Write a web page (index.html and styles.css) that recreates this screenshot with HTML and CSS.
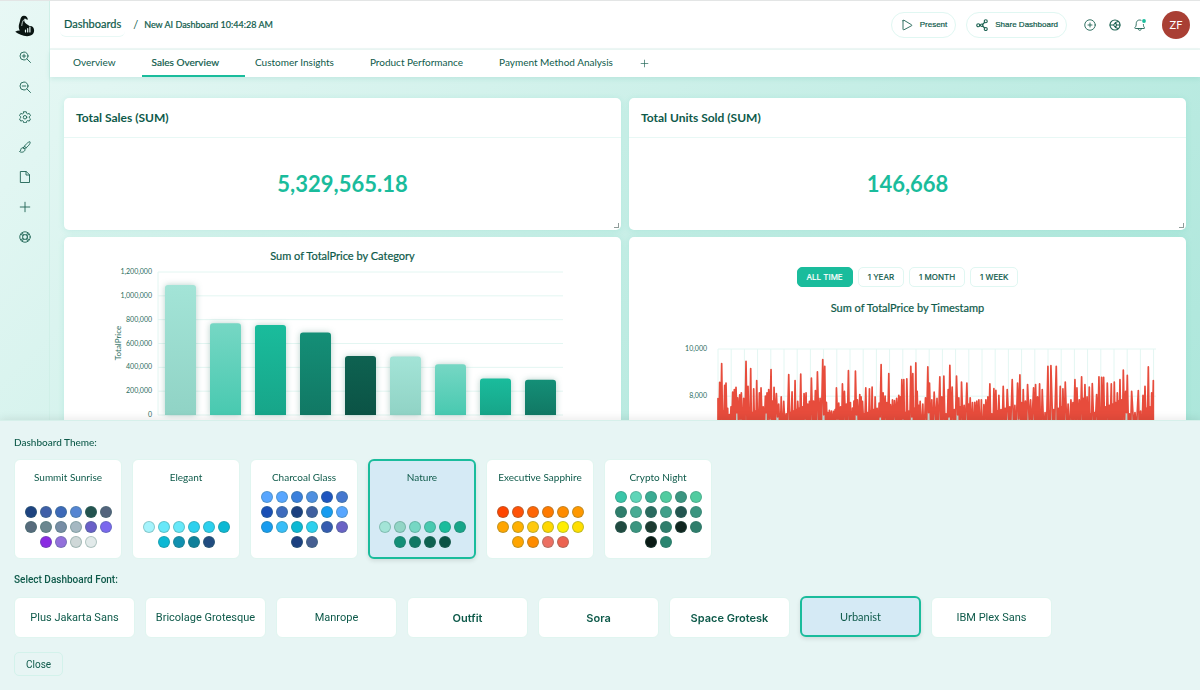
FILE: index.html
```html
<!DOCTYPE html>
<html lang="en">
<head>
    <meta charset="UTF-8">
    <meta name="viewport" content="width=device-width, initial-scale=1.0">
    <title>New AI Dashboard</title>
    <link rel="stylesheet" href="styles.css">
</head>
<body>
    <aside class="sidebar">
        <svg class="logo" viewBox="0 0 20 22">
            <path d="M5 6C5.500 2.500 7 .6 9 .7c2.500 0 3.700 1.700 3.900 4L11 4.200c-.6-1-1.700-.8-1.800.2-.2 1.600.6 3.400 2.300 4.600l3 2c3-.3 4.600 1.700 4.600 4.600 0 3.700-3 5.700-7 5.700-4.600 0-8.200-2.300-11.900-4.500 1.500-1 3-1.500 4.600-1.400C3.600 13.500 3.600 11 4 9.500z" fill="#0a1512"/>
            <path d="M10.500 17v-2M12.700 17v-3.500M14.900 17v-5" stroke="#e8f8f5" stroke-width="1.200"/>
            <path d="M6.800 10.500c.2-2 .5-4 1.800-5.500" stroke="#e8f8f5" stroke-width=".8" fill="none"/>
        </svg>
        <button class="icon-btn" aria-label="Zoom in">
            <svg viewBox="0 0 24 24"><circle cx="10" cy="10" r="8"/><path d="M16 16l7 7M10 6.500v7M6.500 10h7"/></svg>
        </button>
        <button class="icon-btn" aria-label="Zoom out">
            <svg viewBox="0 0 24 24"><circle cx="10" cy="10" r="8"/><path d="M16 16l7 7M6.500 10h7"/></svg>
        </button>
        <button class="icon-btn" aria-label="Settings">
            <svg viewBox="0 0 24 24"><path d="M9.500 1.500h5l.8 3.200 2 1.200 3.200-1 2.500 4.300-2.400 2.200v2.300l2.400 2.200-2.500 4.300-3.200-1-2 1.200-.8 3.100h-5l-.8-3.100-2-1.200-3.200 1L1 15.900l2.400-2.200v-2.300L1 9.200l2.500-4.300 3.200 1 2-1.200z"/><circle cx="12" cy="12.500" r="3.500"/></svg>
        </button>
        <button class="icon-btn" aria-label="Theme">
            <svg viewBox="0 0 24 24"><path d="M9 13.500C12 8 18 1.500 22 1.500c2 3-4.500 10.500-10 13.500zM8.500 13.500c-3-.5-5 1.500-5 4 0 1.800-1 3-2.500 3.500 4 3 11 1 11-4 0-1.800-1.500-3.300-3.500-3.500zM11 10.500l3.500 3"/></svg>
        </button>
        <button class="icon-btn" aria-label="New page">
            <svg viewBox="0 0 24 24"><path d="M3.500 1h11l6.500 6.500V23h-17.500zM14 1v7h7"/></svg>
        </button>
        <button class="icon-btn" aria-label="Add">
            <svg viewBox="0 0 24 24"><path d="M12 2.500v19M2.500 12h19"/></svg>
        </button>
        <button class="icon-btn" aria-label="Help">
            <svg viewBox="0 0 24 24"><circle cx="12" cy="12" r="10.500"/><circle cx="12" cy="12" r="5"/><path d="M3.500 6.500l4.500 2.500M6.500 3.500L9 8M17.500 3.500L15 8M20.500 6.500L16 9M3.500 17.500L8 15M6.500 20.500L9 16M17.500 20.500L15 16M20.500 17.500L16 15"/></svg>
        </button>
    </aside>

    <div class="page">
        <header class="topbar">
            <a class="crumb-home" href="#">Dashboards</a>
            <span class="crumb-sep">/</span>
            <span class="crumb">New AI Dashboard 10:44:28 AM</span>
            <div class="actions">
                <button class="pill">
                    <svg viewBox="0 0 24 24"><path d="M4 3.500v17c0 1 1 1.500 2 1l15-8c1-.6 1-1.500 0-2l-15-9c-1-.5-2 0-2 1z"/></svg>
                    Present
                </button>
                <button class="pill">
                    <svg class="bold" viewBox="0 0 24 24"><circle cx="4.500" cy="12.500" r="3"/><circle cx="11.500" cy="12.500" r="2.500"/><circle cx="19.500" cy="4.500" r="3"/><circle cx="19.500" cy="20" r="3"/><path d="M7 12.500h2M13 11l4.500-4.500M13 14l4.500 4"/></svg>
                    Share Dashboard
                </button>
                <button class="round-btn" aria-label="Add widget">
                    <svg viewBox="0 0 24 24"><circle cx="12" cy="12" r="10.500"/><path d="M12 8v8M8 12h8"/></svg>
                </button>
                <button class="round-btn" aria-label="Appearance">
                    <svg class="bold" viewBox="0 0 24 24"><circle cx="12" cy="12" r="10"/><path d="M2 12h7l4-5 5-2M9 12l4 5 5 2M22 12h-7l-2-5M15 12l-2 5"/></svg>
                </button>
                <button class="round-btn" aria-label="Notifications">
                    <svg viewBox="0 0 24 24"><path d="M14 2.500C8.500.5 4.500 4 4.500 9c0 5-1 6.500-3 8.500 0 1 .5 1.500 1.500 1.500h17c1 0 1.500-.7 1-1.500-1.500-1.700-2-3-2.200-6.500M8 19c0 5 7 5 7 0"/><circle class="dot" cx="20" cy="4" r="3.800"/></svg>
                </button>
                <span class="avatar">ZF</span>
            </div>
        </header>

        <nav class="tabs">
            <button class="tab">Overview</button>
            <button class="tab active">Sales Overview</button>
            <button class="tab">Customer Insights</button>
            <button class="tab">Product Performance</button>
            <button class="tab">Payment Method Analysis</button>
            <button class="tab-add" aria-label="Add tab">
                <svg viewBox="0 0 24 24"><path d="M12 3v18M3 12h18"/></svg>
            </button>
        </nav>

        <main class="grid">
            <section class="card">
                <h2>Total Sales (SUM)</h2>
                <p class="metric">5,329,565.18</p>
            </section>
            <section class="card">
                <h2>Total Units Sold (SUM)</h2>
                <p class="metric">146,668</p>
            </section>
            <section class="card chart-card">
                <h3>Sum of TotalPrice by Category</h3>
                <svg class="chart" id="bar-chart" viewBox="0 0 557 200">
                    <defs>
                        <linearGradient id="g0" x2="0" y2="1"><stop stop-color="#a3e4d7"/><stop offset="1" stop-color="#90d3c5"/></linearGradient>
                        <linearGradient id="g1" x2="0" y2="1"><stop stop-color="#76d7c4"/><stop offset="1" stop-color="#48c9b0"/></linearGradient>
                        <linearGradient id="g2" x2="0" y2="1"><stop stop-color="#1abc9c"/><stop offset="1" stop-color="#17a589"/></linearGradient>
                        <linearGradient id="g3" x2="0" y2="1"><stop stop-color="#148f77"/><stop offset="1" stop-color="#117864"/></linearGradient>
                        <linearGradient id="g4" x2="0" y2="1"><stop stop-color="#0e6251"/><stop offset="1" stop-color="#0b5345"/></linearGradient>
                    </defs>
                </svg>
            </section>
            <section class="card chart-card time-card">
                <div class="ranges">
                    <button class="range active">ALL TIME</button>
                    <button class="range">1 YEAR</button>
                    <button class="range">1 MONTH</button>
                    <button class="range">1 WEEK</button>
                </div>
                <h3>Sum of TotalPrice by Timestamp</h3>
                <svg class="chart" id="line-chart" viewBox="0 0 557 150"></svg>
            </section>
        </main>
    </div>

    <div class="theme-panel">
        <h4 class="label">Dashboard Theme:</h4>
        <div class="themes" id="themes"></div>
        <h4 class="label roboto">Select Dashboard Font:</h4>
        <div class="fonts">
            <button class="font roboto">Plus Jakarta Sans</button>
            <button class="font roboto">Bricolage Grotesque</button>
            <button class="font roboto">Manrope</button>
            <button class="font strong">Outfit</button>
            <button class="font strong">Sora</button>
            <button class="font strong">Space Grotesk</button>
            <button class="font selected">Urbanist</button>
            <button class="font roboto">IBM Plex Sans</button>
        </div>
        <button class="close">Close</button>
    </div>

    <script src="script.js"></script>
</body>
</html>
```
FILE: styles.css
```css
* {
    box-sizing: border-box;
}

body {
    margin: 0;
    display: flex;
    height: 100vh;
    overflow: hidden;
    border-top: 1px solid #e3e5e5;
    background: linear-gradient(135deg, #e8f8f5, #a3e4d7);
    color: #0e5a4a;
    font-family: Lato, sans-serif;
    font-size: 11px;
}

button {
    font: inherit;
    color: inherit;
    background: none;
    border: none;
    padding: 0;
    cursor: pointer;
}

h2, h3, h4, p {
    margin: 0;
}

svg {
    display: block;
    fill: none;
    stroke: #1d6353;
    stroke-width: 1.8;
    stroke-linejoin: round;
    stroke-linecap: round;
}

.roboto {
    font-family: Roboto, sans-serif;
}

/* sidebar */
.sidebar {
    flex: none;
    width: 50px;
    padding-top: 14px;
    border-right: 1px solid #d0f0e8;
    display: flex;
    flex-direction: column;
    align-items: center;
    gap: 18px;
}

.logo {
    width: 20px;
    height: 22px;
    margin-bottom: -4px;
    stroke: none;
}

.icon-btn svg {
    width: 12px;
    height: 12px;
}

/* header */
.page {
    flex: 1;
    min-width: 0;
}

.topbar {
    display: flex;
    align-items: center;
    height: 49px;
    padding: 0 10px;
    background: #fff;
    border-bottom: 2px solid #eef7f5;
}

.crumb-home {
    padding: 5px 4px;
    border-bottom: 1px solid #e8f8f5;
    border-radius: 6px;
    color: inherit;
    text-decoration: none;
    line-height: 14px;
    -webkit-text-stroke: 0.2px;
}

.crumb-sep {
    margin: 0 6px 0 8px;
}

.crumb {
    font-size: 9px;
    -webkit-text-stroke: 0.2px;
}

.actions {
    margin-left: auto;
    display: flex;
    align-items: center;
    gap: 10px;
}

.pill {
    display: flex;
    align-items: center;
    gap: 7px;
    height: 26px;
    padding: 0 8px 0 9px;
    border: 1px solid #e0f7f2;
    border-radius: 13px;
    font: 8px "Liberation Sans", sans-serif;
    -webkit-text-stroke: 0.2px;
}

.pill svg {
    width: 12px;
    height: 12px;
}

svg.bold {
    stroke-width: 2.3;
}

.round-btn {
    width: 15px;
}

.pill + .round-btn {
    margin-left: 5px;
}

.round-btn svg {
    width: 12px;
    height: 12px;
    margin: 0 auto;
}

.dot {
    fill: #1abc9c;
    stroke: none;
}

.avatar {
    width: 28px;
    height: 28px;
    margin-left: 5px;
    border-radius: 50%;
    background: #a93f34;
    color: #fff;
    text-align: center;
    line-height: 28px;
}

/* tabs */
.tabs {
    display: flex;
    height: 27px;
    padding-left: 13px;
    background: #fff;
    box-shadow: 0 2px 5px rgba(22, 160, 133, 0.12);
}

.tab {
    padding: 0 26px 2px 10px;
    border-bottom: 2px solid transparent;
    font-size: 10px;
}

.tab.active {
    border-color: #1abc9c;
    -webkit-text-stroke: 0.2px;
}

.tab-add svg {
    width: 9px;
    height: 9px;
    margin-left: 1px;
}

/* widgets */
.grid {
    display: grid;
    grid-template-columns: 1fr 1fr;
    gap: 7px 8px;
    padding: 21px 14px;
}

.card {
    position: relative;
    background: #fff;
    border-radius: 5px;
    box-shadow: 0 1px 6px rgba(26, 188, 156, 0.15);
}

.card h2 {
    padding: 0 12px;
    border-bottom: 1px solid #e8f8f5;
    font-size: 12px;
    line-height: 39px;
}

/* resize corner */
.card::after {
    content: "";
    position: absolute;
    right: 2px;
    bottom: 2px;
    width: 4px;
    height: 4px;
    border-right: 1px solid #8f9c99;
    border-bottom: 1px solid #8f9c99;
}

.metric {
    padding: 30px 0;
    color: #1abc9c;
    font-size: 22px;
    font-weight: bold;
    line-height: 32px;
    text-align: center;
}

.chart-card {
    padding-top: 11px;
}

.chart-card h3 {
    font-size: 11px;
    font-weight: normal;
    line-height: 16px;
    text-align: center;
    -webkit-text-stroke: 0.2px;
}

.chart {
    width: 100%;
    stroke-linecap: butt;
}

.chart text {
    fill: #2b6e60;
    stroke: none;
    font-size: 7px;
    text-anchor: end;
}

.chart .axis-title {
    font-size: 8px;
    text-anchor: middle;
}

.gridline {
    stroke: #e3f6f2;
    stroke-width: 1;
}

.bar {
    stroke: none;
    filter: drop-shadow(0 0 3px rgba(14, 98, 81, 0.3));
}

.series {
    stroke: #e74c3c;
    stroke-width: 1.7;
    fill: #c5d9d3;
}

.time-card {
    padding-top: 30px;
}

.ranges {
    display: flex;
    justify-content: center;
    gap: 5px;
    margin-bottom: 13px;
}

.range {
    height: 20px;
    padding: 0 9px;
    border: 1px solid #e0f7f2;
    border-radius: 5px;
    font: 8px Inter, sans-serif;
    -webkit-text-stroke: 0.2px;
}

.range.active {
    background: #1abc9c;
    border-color: #1abc9c;
    color: #fff;
}

/* theme and font picker */
.theme-panel {
    position: fixed;
    left: 0;
    right: 0;
    bottom: 0;
    padding: 14px;
    background: #e7f5f4;
    border-top: 1px solid #d6f0ea;
    box-shadow: 0 -2px 8px rgba(0, 0, 0, 0.08);
}

.label {
    margin-bottom: 10px;
    font-size: 10px;
    font-weight: 500;
    line-height: 14px;
}

.themes, .fonts {
    display: flex;
    gap: 10px;
    margin-bottom: 14px;
}

.theme, .font {
    background: #fff;
    border: 1px solid #e0f5f0;
    border-radius: 6px;
}

.theme {
    width: 108px;
    height: 100px;
    padding: 10px 8px;
    display: flex;
    flex-direction: column;
    justify-content: space-between;
    font-size: 10px;
    line-height: 14px;
}

.theme-name {
    width: 100%;
}

.swatches {
    width: 100%;
    display: flex;
    flex-wrap: wrap;
    justify-content: center;
    gap: 3px;
}

.swatch {
    width: 12px;
    height: 12px;
    border: 1px solid rgba(60, 110, 100, 0.3);
    border-radius: 50%;
}

.font {
    width: 121px;
    height: 41px;
    font-size: 11px;
}

.font.strong {
    font-family: Inter, sans-serif;
    font-weight: 600;
}

.theme.selected, .font.selected {
    background: #d5eaf5;
    border: 2px solid #1abc9c;
    box-shadow: 0 2px 4px rgba(0, 0, 0, 0.1);
}

.theme.selected {
    padding: 9px 7px;
}

.font.selected {
    transform: translateY(-1px);
}

.close {
    display: block;
    height: 24px;
    padding: 0 11px;
    border: 1px solid #d3f2eb;
    border-radius: 5px;
    font: 10px Roboto, sans-serif;
}
```
FILE: script.js
```js
var SVG = 'http://www.w3.org/2000/svg';

function add(parent, tag, attrs, text) {
    var el = document.createElementNS(SVG, tag);
    for (var key in attrs) {
        el.setAttribute(key, attrs[key]);
    }
    if (text) el.textContent = text;
    parent.appendChild(el);
    return el;
}

// bar chart
var bars = document.getElementById('bar-chart');
var ticks = ['1,200,000', '1,000,000', '800,000', '600,000', '400,000', '200,000', '0'];
var base = 151;
ticks.forEach(function (label, i) {
    var y = 8 + i * 143 / 6;
    add(bars, 'line', { x1: 94, x2: 499, y1: y, y2: y, class: 'gridline' });
    add(bars, 'text', { x: 88, y: y + 2 }, label);
});
add(bars, 'line', { x1: 94, x2: 94, y1: 8, y2: base, class: 'gridline' });
add(bars, 'text', { x: 0, y: 0, transform: 'translate(57 79) rotate(-90)', class: 'axis-title' }, 'TotalPrice');

var totals = [1090000, 770000, 755000, 692000, 495000, 490000, 425000, 307000, 295000];
totals.forEach(function (value, i) {
    var h = value / 1200000 * 143;
    var x = 101 + i * 45;
    var y = base - h;
    add(bars, 'path', {
        d: 'M' + x + ' ' + base + 'V' + (y + 3) + 'q0 -3 3 -3h25q3 0 3 3V' + base + 'z',
        fill: 'url(#g' + (i % 5) + ')',
        class: 'bar'
    });
});

// time series: [offset, value]
var lines = document.getElementById('line-chart');
var peaks = [
    [0,7900],[5,8590],[11,9380],[20,8460],[24,8560],[34,7220],[44,8170],[49,8280],[54,8380],[59,7930],[65,8060],[70,8140],
    [84,9480],[90,8420],[98,9170],[107,8310],[116,8660],[124,8140],[129,8350],[142,8000],[147,8140],[152,8280],[159,9130],
    [168,8380],[175,8110],[182,7670],[197,7780],[212,8920],[222,8180],[231,8660],[239,7780],[248,8940],[258,8110],[264,8140],
    [274,7780],[280,8770],[292,8240],[298,9030],[314,9550],[320,9270],[325,7740],[334,7400],[347,7360],[355,8350],[362,7710],
    [373,8520],[379,8210],[391,9080],[403,7500],[412,9060],[418,7850],[425,8070],[433,7780],[443,8350],[454,8310],[462,8390],
    [471,7970],[483,7710],[489,9340],[495,8140],[501,8000],[512,8960],[517,7640],[529,7810],[542,8040],[551,8700],[557,8700],
    [566,8740],[578,9270],[584,8960],[593,9410],[597,8210],[606,7780],[622,7930],[629,9240],[634,8560],[648,8170],[665,8820],
    [677,8850],[690,8280],[695,9310],[702,8390],[715,8850],[722,7930],[730,8600],[746,8560],[756,7930],[770,7740],[782,7850],
    [797,7640],[803,7850],[815,8520],[827,8320],[833,8250],[842,8040],[855,8420],[867,8280],[882,8700],[898,8560],[905,8900],
    [915,8280],[928,8490],[946,8350],[952,8490],[964,8520],[972,8280],[989,9270],[998,9300],[1014,9270],[1026,8420],[1034,8310],
    [1041,8600],[1058,7850],[1070,8700],[1076,8350],[1090,8820],[1100,8490],[1113,8390],[1122,8530],[1135,8070],[1142,8820],
    [1150,8800],[1156,8800],[1167,8560],[1179,8520],[1188,8600],[1197,8140],[1205,8700],[1215,9110],[1222,8210],[1227,8880],
    [1240,8210],[1260,8240],[1274,8040],[1280,8420],[1290,9240],[1300,8140],[1305,8660]
];
function px(offset) { return 89 + offset / 1310 * 437; }
function py(value) { return 33 + (10000 - value) * 0.0236; }

for (var i = 0; i <= 33; i++) {
    var gx = 89 + i * 13.2;
    add(lines, 'line', { x1: gx, x2: gx, y1: 33, y2: 150, class: 'gridline' });
}
[10000, 8000].forEach(function (v) {
    add(lines, 'line', { x1: 89, x2: 527, y1: py(v), y2: py(v), class: 'gridline' });
    add(lines, 'text', { x: 78, y: py(v) + 2 }, v.toLocaleString('en-US'));
});

var d = 'M89 150';
peaks.forEach(function (p, i) {
    d += 'L' + px(p[0]) + ' ' + py(p[1]);
    var next = peaks[i + 1];
    if (!next) return;
    var gap = next[0] - p[0];
    var low = 6400 + (i * 37 % 11) * 90;
    if (gap > 7) {
        // small swing between two main peaks
        var mid = 7250 + (i * 53 % 13) * 60;
        d += 'L' + px(p[0] + gap * 0.3) + ' ' + py(low - 300);
        d += 'L' + px(p[0] + gap * 0.5) + ' ' + py(mid);
        d += 'L' + px(p[0] + gap * 0.7) + ' ' + py(low - 500);
    } else {
        d += 'L' + px(p[0] + gap * 0.5) + ' ' + py(low);
    }
});
add(lines, 'path', { d: d + 'V150', class: 'series' });

// theme cards
var themes = [
    ['Summit Sunrise', '1e4380 3f5fa8 3d69b8 5585d2 23534f 53647d 576b7c 6b8790 778da5 a5b8c2 6a5fc8 7b68ee 8a2be2 9370db cfd8d8 e2eaea'],
    ['Elegant', 'a5f3fc 67e8f9 67e8f9 2dd0ee 2dd0ee 0cb8d4 0cb8d4 1190b0 10809a 214c80'],
    ['Charcoal Glass', '58a6ff 58a6ff 3a7fdc 4f8fe0 1f55bf 4577cf 1a4fb5 3d6bbd 1c4080 3f5f9f 179cf0 58a6ff 179cf0 38bdf8 0cb8d4 2dd0ee 355bb0 6a62c5 1c4080 465f92'],
    ['Nature', 'a3e4d7 92d5c6 76d7c4 48c9b0 1abc9c 17a589 148f77 117864 0e6251 0b5345'],
    ['Executive Sapphire', 'ff4500 ff5208 ff6505 ff7a00 ff8c00 ff9800 ffa500 ffb000 ffc90e ffd700 ffee00 ffde00 ffa500 ff8c00 ec7063 ec6350'],
    ['Crypto Night', '3ac5a8 5fd5b8 3bab92 52cca0 3b9580 52cca0 2f7e6c 48ab94 2a6b5f 40a08a 235650 3b9580 204a40 3b9580 1c3a30 2f7e6c 10251f 2f7e6c 0a1a15 2a8570']
];
var list = document.getElementById('themes');
themes.forEach(function (theme) {
    var btn = document.createElement('button');
    btn.className = theme[0] === 'Nature' ? 'theme selected' : 'theme';
    var dots = theme[1].split(' ').map(function (c) {
        return '<span class="swatch" style="background:#' + c + '"></span>';
    }).join('');
    btn.innerHTML = '<span class="theme-name">' + theme[0] + '</span><span class="swatches">' + dots + '</span>';
    list.appendChild(btn);
});
```
